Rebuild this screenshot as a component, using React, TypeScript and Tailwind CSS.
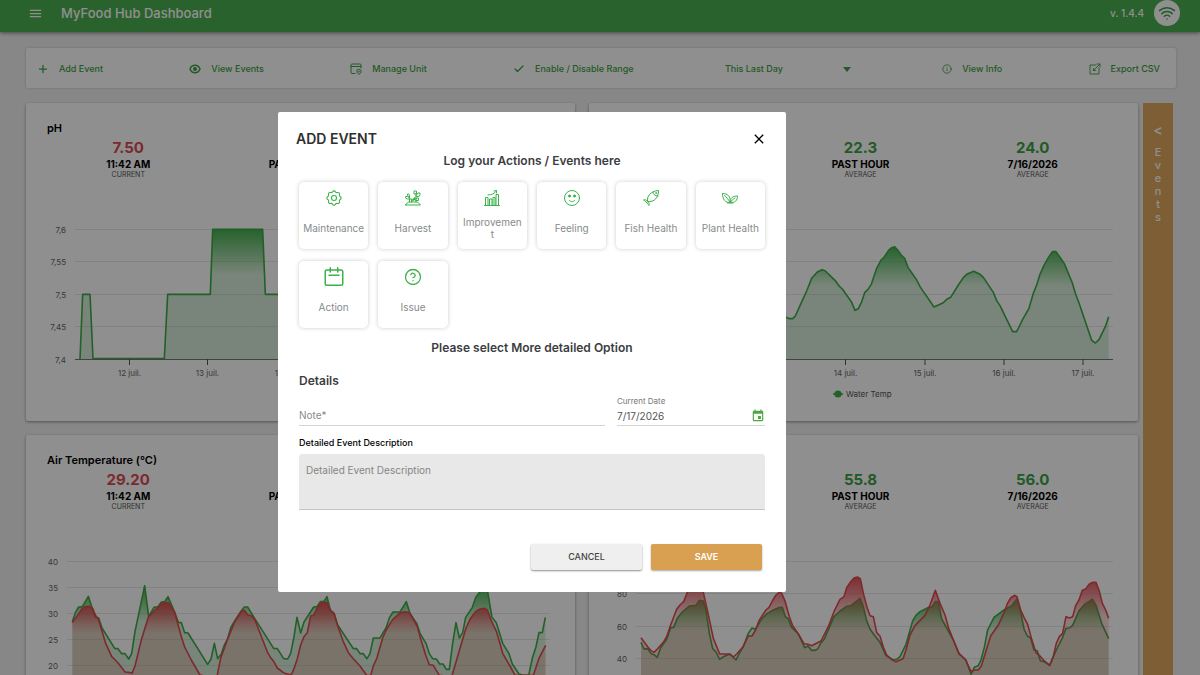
import type { ReactNode } from "react";
import { Check, CircleHelp, Info, Plus, Wifi } from "lucide-react";
import { MdClose, MdEvent, MdMenu } from "react-icons/md";

type Point = [number, number];

const GREEN = "#3cab46";
const RED = "#e0494f";

/* Series are sampled on a grid three times finer than the drawing. */
const place = (data: Point[], dx: number, dy: number): Point[] =>
  data.map(([x, y]) => [x / 3 + dx, y / 3 + dy]);

const ph: Point[] = place(
  [[240, 433], [248, 238], [270, 238], [279, 431], [493, 431], [503, 238], [631, 238], [638, 43], [788, 43], [796, 238], [1100, 238], [1110, 433], [1600, 433]],
  -26, 0,
);

const waterTemp: Point[] = place(
  [[-250, 230], [-150, 300], [-60, 200], [0, 290], [18, 307], [28, 311], [38, 311], [46, 303], [60, 272], [80, 228], [95, 190], [112, 171], [126, 164], [136, 168], [165, 196], [178, 214], [187, 222], [215, 262], [225, 286], [235, 281], [244, 263], [254, 233], [264, 223], [274, 208], [290, 160], [303, 135], [312, 127], [325, 107], [335, 98], [344, 95], [353, 105], [365, 122], [374, 130], [384, 157], [410, 195], [420, 215], [462, 276], [490, 263], [503, 251], [512, 247], [535, 210], [550, 188], [560, 178], [581, 169], [600, 178], [610, 187], [640, 232], [650, 257], [660, 272], [698, 350], [710, 350], [728, 313], [747, 280], [760, 235], [770, 210], [780, 178], [792, 151], [805, 128], [817, 110], [828, 110], [840, 127], [853, 146], [877, 204], [887, 238], [897, 264], [935, 376], [946, 384], [957, 374], [976, 335], [986, 305]],
  191, 0,
);

const airInside: Point[] = [
  ...place(
    [[217, 575], [226, 548], [236, 531], [247, 530], [265, 499], [285, 560], [296, 564], [306, 594], [344, 655], [354, 656], [365, 671], [375, 671], [386, 687], [395, 671], [405, 605], [434, 467], [446, 560], [462, 532], [474, 530], [484, 516], [494, 515], [504, 500], [524, 547], [535, 577], [544, 578], [554, 608], [564, 609], [623, 703], [633, 687], [643, 640], [653, 686], [664, 672], [673, 645], [683, 626], [692, 594], [704, 573], [722, 545], [733, 531], [743, 531], [762, 562], [821, 655], [832, 656]],
    -26, -117,
  ),
  ...place(
    [[11, 386], [23, 387], [32, 370], [42, 320], [51, 262], [62, 309], [72, 276], [101, 231], [111, 230], [121, 215], [132, 214], [141, 200], [151, 240], [162, 250], [173, 285], [220, 356], [230, 356], [240, 371], [250, 371], [261, 386], [270, 371], [280, 324], [300, 324], [318, 294], [329, 262], [339, 246], [360, 246], [379, 215], [390, 250], [410, 280], [420, 310], [438, 340], [448, 371], [458, 386], [469, 387], [479, 402], [489, 402], [499, 418], [508, 418], [518, 340], [528, 278], [538, 324], [548, 308], [557, 262], [577, 232], [588, 200], [600, 185], [622, 180], [636, 262], [649, 278], [668, 340], [687, 371], [697, 402], [717, 432], [728, 435], [746, 436], [757, 385], [768, 350], [777, 308], [787, 308], [796, 262]],
    254, -17,
  ),
];

const airOutside: Point[] = [
  ...place(
    [[217, 578], [247, 535], [255, 530], [268, 529], [278, 535], [286, 555], [296, 570], [316, 637], [335, 680], [345, 689], [355, 700], [375, 726], [386, 727], [396, 730], [405, 708], [425, 626], [445, 562], [456, 549], [484, 522], [495, 518], [506, 519], [524, 547], [544, 620], [554, 651], [574, 690], [600, 735], [650, 745], [662, 685], [685, 622], [703, 578], [725, 543], [733, 541], [743, 554], [755, 558], [765, 570], [803, 668], [812, 683], [821, 694], [832, 714]],
    -26, -117,
  ),
  ...place(
    [[10, 428], [28, 434], [35, 432], [42, 416], [52, 386], [62, 345], [72, 320], [82, 308], [92, 258], [101, 256], [111, 235], [121, 220], [132, 217], [141, 218], [151, 240], [162, 250], [173, 287], [190, 335], [205, 368], [220, 386], [240, 408], [260, 436], [272, 437], [280, 408], [290, 386], [308, 324], [320, 297], [338, 269], [360, 249], [375, 245], [388, 248], [400, 268], [412, 290], [420, 320], [438, 378], [448, 404], [460, 406], [478, 436], [515, 440], [527, 400], [548, 328], [558, 294], [570, 268], [588, 244], [600, 237], [612, 235], [622, 240], [633, 270], [650, 306], [668, 370], [690, 408], [705, 436], [760, 436], [777, 385], [797, 346]],
    254, -17,
  ),
];

const humidityOutside: Point[] = [
  ...place(
    [[1083, 323], [1093, 337], [1103, 350], [1112, 361], [1122, 367], [1132, 357], [1150, 337], [1160, 320], [1172, 285], [1190, 238], [1200, 225], [1211, 215], [1222, 187], [1235, 172], [1260, 172], [1270, 187], [1283, 245], [1300, 325], [1319, 372], [1340, 372], [1350, 373], [1360, 381], [1370, 372], [1388, 352], [1405, 318], [1416, 318], [1427, 300], [1437, 272], [1448, 255], [1458, 240], [1467, 232], [1477, 213], [1488, 195], [1498, 187], [1505, 190], [1515, 213]],
    -309, -17,
  ),
  ...place(
    [[28, 560], [38, 587], [55, 612], [72, 641], [84, 643], [95, 647], [123, 633], [145, 590], [162, 545], [180, 508], [192, 500], [200, 473], [212, 455], [222, 444], [232, 441], [241, 446], [250, 490], [262, 535], [270, 557], [280, 560], [290, 608], [300, 618], [310, 652], [320, 675], [338, 691], [348, 695], [369, 686], [378, 660], [390, 615], [405, 587], [435, 556], [448, 530], [466, 481], [480, 520], [495, 555], [505, 592], [520, 630], [537, 670], [556, 689], [573, 724], [585, 720], [595, 720], [604, 708], [632, 618], [655, 585], [673, 547], [682, 521], [692, 504], [703, 496], [711, 500], [722, 540], [732, 562], [743, 583], [755, 628], [768, 668], [782, 680], [792, 692], [802, 700], [809, 706], [819, 682], [829, 640], [838, 620], [848, 610], [858, 560], [868, 564], [878, 560], [887, 527], [897, 510], [907, 481], [917, 477], [928, 462], [937, 457], [948, 457], [958, 484], [967, 520], [977, 540], [986, 565]],
    191, -117,
  ),
];

const humidityInside: Point[] = [
  ...place(
    [[1083, 337], [1092, 357], [1103, 356], [1113, 371], [1122, 374], [1132, 382], [1142, 353], [1160, 328], [1172, 293], [1181, 292], [1192, 265], [1205, 248], [1228, 228], [1248, 226], [1258, 211], [1270, 213], [1278, 240], [1288, 310], [1298, 356], [1308, 366], [1319, 388], [1330, 380], [1350, 372], [1368, 390], [1378, 370], [1390, 350], [1405, 310], [1416, 294], [1426, 298], [1445, 267], [1462, 250], [1480, 240], [1496, 233]],
    -309, -17,
  ),
  ...place(
    [[7, 532], [16, 560], [25, 567], [35, 592], [55, 612], [74, 653], [84, 648], [94, 661], [105, 661], [113, 657], [122, 640], [133, 627], [148, 592], [162, 560], [180, 543], [200, 529], [212, 527], [225, 517], [240, 505], [250, 530], [260, 572], [270, 597], [282, 614], [300, 637], [318, 677], [340, 690], [350, 688], [360, 680], [378, 643], [398, 573], [408, 556], [420, 545], [448, 531], [456, 531], [466, 515], [475, 515], [485, 567], [520, 630], [537, 672], [558, 690], [573, 733], [583, 712], [595, 707], [603, 690], [613, 652], [623, 600], [642, 562], [672, 540], [695, 527], [711, 507], [722, 545], [732, 597], [742, 618], [752, 624], [762, 660], [772, 662], [781, 692], [792, 695], [809, 706], [819, 682], [829, 660], [848, 622], [858, 595], [868, 594], [878, 586], [897, 542], [917, 520], [928, 514], [937, 507], [948, 526], [965, 580], [986, 626]],
    191, -117,
  ),
];

interface Series {
  color: string;
  data: Point[];
}

interface ChartProps {
  id: string;
  label: string;
  left: number;
  right: number;
  rows: [string, number][];
  ticks?: [string, number][];
  series: Series[];
  legend?: string;
}

const BASE = 144;

function Chart({ id, label, left, right, rows, ticks = [], series, legend }: ChartProps) {
  return (
    <svg viewBox="0 0 549 206" className="block w-full" role="img" aria-label={label}>
      {rows.map(([text, y]) => (
        <g key={text}>
          <line x1={left} x2={right} y1={y} y2={y} stroke="#e8e8e8" strokeWidth="1" />
          <text x={left - 9} y={y + 3} textAnchor="end" fontSize="8" fill="#666">{text}</text>
        </g>
      ))}
      {series.map(({ color, data }, i) => {
        const line = data.map((p) => p.join(",")).join(" ");
        const top = Math.min(...data.map((p) => p[1]));
        const first = data[0][0];
        const last = data[data.length - 1][0];
        return (
          <g key={color}>
            <linearGradient id={`${id}-${i}`} gradientUnits="userSpaceOnUse" x1="0" x2="0" y1={top} y2={BASE}>
              <stop offset="0" stopColor={color} stopOpacity="0.95" />
              <stop offset="0.35" stopColor={color} stopOpacity="0.2" />
              <stop offset="1" stopColor={color} stopOpacity="0.2" />
            </linearGradient>
            <polygon points={`${first},${BASE} ${line} ${last},${BASE}`} fill={`url(#${id}-${i})`} />
            <polyline points={line} fill="none" stroke={color} strokeWidth="1.6" strokeLinejoin="round" />
          </g>
        );
      })}
      <line x1={left} x2={right} y1={BASE + 0.5} y2={BASE + 0.5} stroke="#777" strokeWidth="1" />
      {ticks.map(([text, x]) => (
        <g key={text}>
          <line x1={x} x2={x} y1={BASE} y2={BASE + 6} stroke="#555" strokeWidth="1" />
          <text x={x} y={BASE + 17} textAnchor="middle" fontSize="8" fill="#666">{text}</text>
        </g>
      ))}
      {legend && (
        <g>
          <line x1="244" x2="254" y1="179" y2="179" stroke={GREEN} strokeWidth="1.5" />
          <circle cx="249" cy="179" r="3.6" fill={GREEN} />
          <text x="257" y="182" fontSize="8" fill="#555">{legend}</text>
        </g>
      )}
    </svg>
  );
}

interface Stat {
  value: string;
  when: string;
  kind: string;
  alert?: boolean;
}

function Card({ title, stats, children }: { title: string; stats: Stat[]; children: ReactNode }) {
  return (
    <section className="rounded-[2px] bg-white shadow-[0_1px_3px_rgba(0,0,0,0.4)]">
      <div className="h-28 pt-[18px]">
        <h2 className="px-[21px] text-[11px] leading-[14px] font-semibold text-black">{title}</h2>
        <div className="flex justify-around px-[21px] pt-1 text-center">
          {stats.map((s) => (
            <div key={s.when}>
              <p className={s.alert ? "text-[15px] leading-[18px] font-bold text-[#dd4a52]" : "text-[15px] leading-[18px] font-bold text-[#3aa046]"}>
                {s.value}
              </p>
              <p className="text-[10px] leading-[14px] font-bold text-black">{s.when}</p>
              <p className="text-[7px] leading-[7px] text-[#555]">{s.kind}</p>
            </div>
          ))}
        </div>
      </div>
      {children}
    </section>
  );
}

const stroke = { fill: "none", stroke: "currentColor", strokeLinecap: "round", strokeLinejoin: "round" } as const;

function EyeIcon() {
  return (
    <svg viewBox="0 0 24 24" className="size-3" {...stroke} strokeWidth="3">
      <path d="M2 12c2-5 6-7.500 10-7.500s8 2.500 10 7.500c-2 5-6 7.500-10 7.500S4 17 2 12Z" />
      <circle cx="12" cy="12" r="2.500" fill="currentColor" />
    </svg>
  );
}

function UnitIcon() {
  return (
    <svg viewBox="0 0 24 24" className="size-3" {...stroke} strokeWidth="2">
      <path d="M10 21H4a2 2 0 0 1-2-2V4a2 2 0 0 1 2-2h16a2 2 0 0 1 2 2v6M2 7h20" />
      <path d="M18 13l4 1.500v3c0 2.500-2 4-4 5-2-1-4-2.500-4-5v-3ZM17 17.500h2" />
    </svg>
  );
}

function ExportIcon() {
  return (
    <svg viewBox="0 0 24 24" className="size-3" {...stroke} strokeWidth="1.800">
      <path d="M14 4H2v18h18V10M9 15 22 2M16 2h6v6M9 11v4h4" />
    </svg>
  );
}

const polar = (r: number, deg: number) => {
  const a = (deg * Math.PI) / 180;
  return `${(16 + r * Math.cos(a)).toFixed(2)} ${(16 + r * Math.sin(a)).toFixed(2)}`;
};

const cog =
  `M${polar(12.8, -13)}` +
  Array.from({ length: 8 }, (_, k) => `A3.2 3.2 0 0 1 ${polar(12.8, k * 45 + 13)}A3.4 3.4 0 0 0 ${polar(12.8, k * 45 + 32)}`).join("") +
  "Z";

function MaintenanceIcon() {
  return (
    <svg viewBox="0 0 32 32" className="size-4" {...stroke} strokeWidth="2.200">
      <path d={cog} />
      <circle cx="16" cy="16" r="5" />
    </svg>
  );
}

function HarvestIcon() {
  return (
    <svg viewBox="0 0 32 32" className="size-4" {...stroke} strokeWidth="2">
      <path d="M1 30h30l-6-6H8ZM9 24V12M22 24V7M9 18H5a4 4 0 0 1-4-4v-1h4a4 4 0 0 1 4 4M9 15v-4a3 3 0 0 0-4-3v3l4 3M13 24v-6h-3M13 20l4-3v4l-4 1M22 20h-3v-5l3 2M22 13h4a4 4 0 0 0 4-4V6h-4l-4 5M22 8h-4V2h5v5M22 21h5v-5h-3l-2 2" />
    </svg>
  );
}

function ImprovementIcon() {
  return (
    <svg viewBox="0 0 32 32" className="size-4" {...stroke} strokeWidth="2">
      <path d="M1 31h30M3 31V15h5v16M11 31V18h5v13M18 31V15h4v16M24 31V9h5v22M8 10c7 0 13-3 17-8M20 2l5-1v5" />
    </svg>
  );
}

function FeelingIcon() {
  return (
    <svg viewBox="0 0 32 32" className="size-4" {...stroke} strokeWidth="2">
      <circle cx="16" cy="16" r="15" />
      <circle cx="11" cy="12" r="2" fill="currentColor" />
      <circle cx="21" cy="12" r="2" fill="currentColor" />
      <path d="M10.500 20.500c3 4 8 4 11 0" />
    </svg>
  );
}

function FishIcon() {
  return (
    <svg viewBox="0 0 32 32" className="size-4" {...stroke} strokeWidth="2">
      <path d="M9 23C7 13 15 2 31 1c0 14-8 24-22 22ZM20 4c0 5 4 8 10 8M9 23c-2-4-5-4-8-3 2 1 4 2 5 4M9 23c4 2 4 5 3 8-1-2-3-4-6-7" />
      <circle cx="26" cy="6" r="0.800" />
    </svg>
  );
}

function PlantIcon() {
  return (
    <svg viewBox="0 0 32 32" className="size-4" {...stroke} strokeWidth="2">
      <path d="M16 25C7 26 1 19 1 7c10 0 17 5 15 18ZM5 11c4 3 7 7 11 14M17 25c-1-9 4-13 14-13 0 9-5 14-14 13ZM26 16c-4 2-7 5-9 9M11 26h11" />
    </svg>
  );
}

function ActionIcon() {
  return (
    <svg viewBox="0 0 24 24" className="size-5" {...stroke} strokeWidth="1.800">
      <path d="M1.500 5.500a2 2 0 0 1 2-2h17a2 2 0 0 1 2 2V20a2 2 0 0 1-2 2h-17a2 2 0 0 1-2-2ZM7.500 1v5M16.500 1v5M6 10h12" />
    </svg>
  );
}

const categories: [string, ReactNode][] = [
  ["Maintenance", <MaintenanceIcon />],
  ["Harvest", <HarvestIcon />],
  ["Improvement", <ImprovementIcon />],
  ["Feeling", <FeelingIcon />],
  ["Fish Health", <FishIcon />],
  ["Plant Health", <PlantIcon />],
  ["Action", <ActionIcon />],
  ["Issue", <CircleHelp className="size-[18px]" strokeWidth={1.7} />],
];

function ToolButton({ icon, children }: { icon: ReactNode; children: ReactNode }) {
  return (
    <button type="button" className="flex items-center gap-[10px] whitespace-nowrap">
      {icon}
      {children}
    </button>
  );
}

function EventDialog() {
  return (
    <div role="dialog" aria-modal="true" aria-labelledby="dialog-title" className="w-[508px] rounded-[2px] bg-white px-[18px] pt-[18px] pb-[22px] text-[#3c3d42]">
      <div className="flex h-[18px] items-center justify-between">
        <h2 id="dialog-title" className="text-[14px] leading-[18px] font-semibold text-[#2f2f2f]">ADD EVENT</h2>
        <button type="button" aria-label="Close" className="mr-px text-black"><MdClose className="size-4" /></button>
      </div>
      <div className="px-[3px]">
        <h3 className="pt-[5px] text-center text-[12px] leading-4 font-semibold">Log your Actions / Events here</h3>
        <div className="mt-[13px] grid grid-cols-6 gap-x-[10px] gap-y-3">
          {categories.map(([name, icon]) => (
            <button key={name} type="button" className="flex h-[67px] flex-col items-center rounded-[5px] bg-white px-1 pt-[6px] text-[10px] leading-[12px] text-[#868b8b] shadow-[0_0_4px_rgba(0,0,0,0.2)]">
              <span className="flex h-5 items-center text-[#3bb24a]">{icon}</span>
              <span className="flex h-10 w-full items-center justify-center text-center">
                <span className="w-full break-all">{name}</span>
              </span>
            </button>
          ))}
        </div>
        <h3 className="pt-3 text-center text-[12px] leading-4 font-semibold">Please select More detailed Option</h3>
        <h3 className="pt-[17px] text-[12px] leading-4 font-semibold">Details</h3>
        <form>
          <div className="flex items-end gap-3 pt-[7px]">
            <input aria-label="Note" placeholder="Note*" className="h-5 min-w-0 grow border-b border-[#d4d4d4] pb-[2px] text-[10px] outline-none placeholder:text-[#8a8a8a]" />
            <div className="flex w-[148px] flex-col border-b border-[#d4d4d4]">
              <label htmlFor="date" className="text-[8px] leading-[11px] text-[#777]">Current Date</label>
              <div className="flex h-[18px] items-center">
                <input id="date" defaultValue="7/17/2026" className="min-w-0 grow text-[10px] text-[#555] outline-none" />
                <button type="button" aria-label="Open calendar" className="text-[#4aa93f]"><MdEvent className="size-[14px]" /></button>
              </div>
            </div>
          </div>
          <label htmlFor="description" className="mt-[11px] block text-[9px] leading-3 font-medium text-black">Detailed Event Description</label>
          <textarea id="description" placeholder="Detailed Event Description" className="mt-[5px] block h-14 w-full resize-none rounded-t-[3px] border-b border-[#c4c4c4] bg-[#e8e8e8] px-[7px] py-[9px] text-[10px] outline-none placeholder:text-[#858585]" />
          <div className="flex justify-end gap-[9px] pt-[34px] pr-[3px]">
            <button type="button" className="h-[26px] w-[111px] rounded-[2px] bg-[#efefef] text-[9px] font-medium text-[#444] shadow-[0_1px_2px_rgba(0,0,0,0.45)]">CANCEL</button>
            <button type="submit" className="h-[26px] w-[111px] rounded-[2px] bg-[#daa052] text-[9px] font-semibold text-white shadow-[0_1px_2px_rgba(0,0,0,0.35)]">SAVE</button>
          </div>
        </form>
      </div>
    </div>
  );
}

const phDays: [string, number][] = [["12 juil.", 103.5], ["13 juil.", 181.5], ["14 juil.", 260.5]];
const waterDays: [string, number][] = [["14 juil.", 256.5], ["15 juil.", 336], ["16 juil.", 415], ["17 juil.", 494]];

export default function App() {
  return (
    <div className="flex h-screen flex-col overflow-hidden bg-[#f1f1f1] font-[Inter,'Open_Sans',sans-serif]">
      <header className="z-10 flex h-8 shrink-0 items-center bg-[#4caf50] pr-5 pb-[6px] pl-7 text-white shadow-[0_1px_4px_rgba(0,0,0,0.5)]">
        <button type="button" aria-label="Menu"><MdMenu className="size-[15px]" /></button>
        <h1 className="pl-[18px] text-[13px] leading-[18px] font-medium">MyFood Hub Dashboard</h1>
        <span className="mr-[10px] ml-auto text-[10px] font-medium">v. 1.4.4</span>
        <span className="flex size-[26px] items-center justify-center rounded-full bg-white text-[#3f9f45]"><Wifi className="size-[18px]" strokeWidth={2} /></span>
      </header>

      <main className="flex min-h-0 grow flex-col pt-4 pr-6 pl-[26px]">
        <nav className="flex h-10 shrink-0 items-center justify-between rounded-[2px] bg-white pt-px pr-4 pl-[11px] text-[9px] font-medium text-[#3f9f45] shadow-[0_0_3px_rgba(0,0,0,0.2)]">
          <ToolButton icon={<Plus className="size-3" strokeWidth={2.5} />}>Add Event</ToolButton>
          <ToolButton icon={<EyeIcon />}>View Events</ToolButton>
          <ToolButton icon={<UnitIcon />}>Manage Unit</ToolButton>
          <ToolButton icon={<Check className="size-3" strokeWidth={2.5} />}>Enable / Disable Range</ToolButton>
          <div className="relative">
            <select aria-label="Period" className="w-[136px] appearance-none bg-transparent px-[5px]">
              <option>This Last Day</option>
            </select>
            <svg viewBox="0 0 8 5" className="pointer-events-none absolute top-[5px] right-[5px] h-[5px] w-2" fill="currentColor"><path d="M0 0h8L4 5Z" /></svg>
          </div>
          <ToolButton icon={<Info className="size-[10px]" strokeWidth={2} />}>View Info</ToolButton>
          <ToolButton icon={<ExportIcon />}>Export CSV</ToolButton>
        </nav>

        <div className="flex min-h-0 grow gap-[5px] pt-[15px] pr-[3px]">
          <div className="grid grow grid-cols-2 content-start gap-[14px]">
            <Card title="pH" stats={[
              { value: "7.50", when: "11:42 AM", kind: "CURRENT", alert: true },
              { value: "7.50", when: "PAST HOUR", kind: "AVERAGE" },
              { value: "7.50", when: "7/16/2026", kind: "AVERAGE" },
            ]}>
              <Chart id="ph" label="pH" left={49} right={524}
                rows={[["7,6", 14.5], ["7,55", 46.5], ["7,5", 79.5], ["7,45", 111.5], ["7,4", 144.5]]}
                ticks={phDays} series={[{ color: GREEN, data: ph }]} />
            </Card>
            <Card title="Water Temperature (°C)" stats={[
              { value: "22.8", when: "11:42 AM", kind: "CURRENT" },
              { value: "22.3", when: "PAST HOUR", kind: "AVERAGE" },
              { value: "24.0", when: "7/16/2026", kind: "AVERAGE" },
            ]}>
              <Chart id="water" label="Water temperature" left={47} right={524}
                rows={[["30", 14.5], ["27", 46.5], ["24", 79.5], ["21", 111.5], ["18", 144.5]]}
                ticks={waterDays} series={[{ color: GREEN, data: waterTemp }]} legend="Water Temp" />
            </Card>
            <Card title="Air Temperature (°C)" stats={[
              { value: "29.20", when: "11:42 AM", kind: "CURRENT", alert: true },
              { value: "28.6", when: "PAST HOUR", kind: "AVERAGE" },
              { value: "26.1", when: "7/16/2026", kind: "AVERAGE" },
            ]}>
              <Chart id="air" label="Air temperature" left={41} right={524}
                rows={[["40", 14.5], ["35", 40.5], ["30", 66.5], ["25", 92.5], ["20", 118.5]]}
                series={[{ color: GREEN, data: airInside }, { color: RED, data: airOutside }]} />
            </Card>
            <Card title="Humidity (%)" stats={[
              { value: "52.4", when: "11:42 AM", kind: "CURRENT" },
              { value: "55.8", when: "PAST HOUR", kind: "AVERAGE" },
              { value: "56.0", when: "7/16/2026", kind: "AVERAGE" },
            ]}>
              <Chart id="humidity" label="Humidity" left={47} right={524}
                rows={[["100", 14.5], ["80", 46.5], ["60", 79.5], ["40", 111.5]]}
                series={[{ color: GREEN, data: humidityInside }, { color: RED, data: humidityOutside }]} />
            </Card>
          </div>
          <button type="button" aria-label="Open events" className="flex w-[30px] shrink-0 flex-col items-center bg-[#e0a85f] pt-5 text-[11px] leading-[13px] font-medium text-white">
            <span className="pb-[10px] text-[14px] font-semibold">&lt;</span>
            {["E", "v", "e", "n", "t", "s"].map((letter, i) => <span key={i}>{letter}</span>)}
          </button>
        </div>
      </main>

      <div className="fixed inset-0 z-20 flex items-center justify-center bg-black/44 pt-[29px] pr-[136px]">
        <EventDialog />
      </div>
    </div>
  );
}
